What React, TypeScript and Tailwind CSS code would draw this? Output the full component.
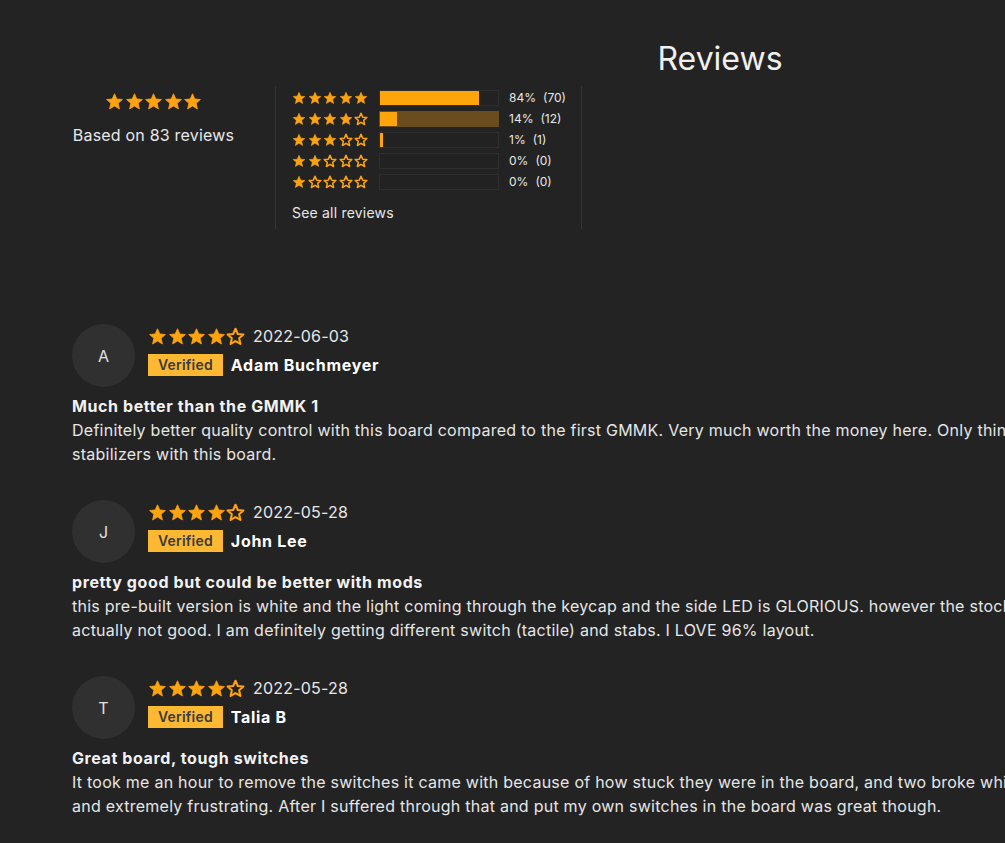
import React from "react";

type Review = {
    initial: string;
    rating: number;
    date: string;
    name: string;
    title: string;
    lines: string[];
};

const reviews: Review[] = [
    {
        initial: "A",
        rating: 4,
        date: "2022-06-03",
        name: "Adam Buchmeyer",
        title: "Much better than the GMMK 1",
        lines: [
            "Definitely better quality control with this board compared to the first GMMK. Very much worth the money here. Only thing I would change is the",
            "stabilizers with this board.",
        ],
    },
    {
        initial: "J",
        rating: 4,
        date: "2022-05-28",
        name: "John Lee",
        title: "pretty good but could be better with mods",
        lines: [
            "this pre-built version is white and the light coming through the keycap and the side LED is GLORIOUS. however the stock switches are",
            "actually not good. I am definitely getting different switch (tactile) and stabs. I LOVE 96% layout.",
        ],
    },
    {
        initial: "T",
        rating: 4,
        date: "2022-05-28",
        name: "Talia B",
        title: "Great board, tough switches",
        lines: [
            "It took me an hour to remove the switches it came with because of how stuck they were in the board, and two broke which was annoying",
            "and extremely frustrating. After I suffered through that and put my own switches in the board was great though.",
        ],
    },
];

const histogram = [
    { stars: 5, pct: 84, count: 70, highlight: false },
    { stars: 4, pct: 14, count: 12, highlight: true },
    { stars: 3, pct: 1, count: 1, highlight: false },
    { stars: 2, pct: 0, count: 0, highlight: false },
    { stars: 1, pct: 0, count: 0, highlight: false },
];

const STAR = "M12 2.2l2.9 6.6 7.1.7-5.4 4.8 1.6 7.1L12 17.7l-6.2 3.7 1.6-7.1L2 9.5l7.1-.7z";

const Star = ({ filled, size }: { filled: boolean; size: number }) => (
    <svg width={size} height={size} viewBox="0 0 24 24" className="shrink-0">
        {filled ? (
            <path d={STAR} fill="#ffa30f" stroke="#ffa30f" strokeWidth="1" strokeLinejoin="round" />
        ) : (
            <path d={STAR} fill="none" stroke="#ffa30f" strokeWidth="2.6" strokeLinejoin="round" />
        )}
    </svg>
);

const Stars = ({ rating, size, gap }: { rating: number; size: number; gap: string }) => (
    <div className={`flex items-center ${gap}`}>
        {[1, 2, 3, 4, 5].map((i) => (
            <Star key={i} filled={i <= rating} size={size} />
        ))}
    </div>
);

const App: React.FC = () => {
    return (
        <div className="w-[1005px] h-[843px] overflow-hidden bg-[#232323] text-[#e8e8e8] font-['Inter',sans-serif]">
            <div className="w-[1440px] px-[72px]">
                <h1 className="pt-[39px] text-center text-[32px] leading-[40px] font-normal text-[#f0f0f0]">
                    Reviews
                </h1>

                {/* Summary */}
                <div className="flex mt-[7px]">
                    <div className="w-[163px] flex flex-col items-center pt-[6px]">
                        <Stars rating={5} size={19} gap="gap-[0.5px]" />
                        <div className="mt-[14px] text-[16px] leading-[20px] tracking-[0.2px] whitespace-nowrap">
                            Based on 83 reviews
                        </div>
                    </div>
                    <div className="ml-[40px] w-[307px] border-l border-r border-[#363636] pl-[16px] pt-[4px] pb-[6px]">
                        <div className="flex flex-col gap-[5px]">
                            {histogram.map((row) => (
                                <div key={row.stars} className="flex items-center h-[16px]">
                                    <Stars rating={row.stars} size={14} gap="gap-[1.5px]" />
                                    <div
                                        className={`ml-[11px] w-[120px] h-[16px] border ${
                                            row.highlight
                                                ? "bg-[#6a4c1f] border-[#6a4c1f]"
                                                : "bg-[#222222] border-[#2e2e2e]"
                                        }`}
                                    >
                                        <div
                                            className="h-full bg-[#ffa50a]"
                                            style={{ width: `${row.pct}%`, minWidth: row.pct > 0 ? "3px" : 0 }}
                                        />
                                    </div>
                                    <div className="ml-[10px] text-[12px] leading-[16px] flex gap-[7px]">
                                        <span>{row.pct}%</span>
                                        <span>({row.count})</span>
                                    </div>
                                </div>
                            ))}
                        </div>
                        <div className="mt-[13px] text-[14px] leading-[20px] tracking-[0.2px]">See all reviews</div>
                    </div>
                </div>

                {/* Review list */}
                <div className="mt-[95px] flex flex-col gap-[34px]">
                    {reviews.map((r) => (
                        <div key={r.name}>
                            <div className="flex gap-[13px]">
                                <div className="w-[63px] h-[63px] rounded-full bg-[#303030] flex items-center justify-center text-[16px] text-[#e0e0e0]">
                                    {r.initial}
                                </div>
                                <div className="pt-[2px]">
                                    <div className="flex items-center h-[20px] gap-[8px]">
                                        <Stars rating={r.rating} size={19} gap="gap-[0.5px]" />
                                        <span className="text-[16px] leading-[20px] tracking-[0.2px]">{r.date}</span>
                                    </div>
                                    <div className="mt-[7px] flex items-center gap-[8px]">
                                        <span className="h-[22px] px-[10px] bg-[#fdb833] text-[#3b3b3b] text-[14px] font-semibold leading-[22px] tracking-[0.2px]">
                                            Verified
                                        </span>
                                        <span className="text-[16px] font-bold tracking-[0.7px] text-white">{r.name}</span>
                                    </div>
                                </div>
                            </div>
                            <div className="mt-[7px] text-[16px] leading-[24px] font-bold tracking-[0.6px] text-[#f2f2f2]">
                                {r.title}
                            </div>
                            <p className="text-[16px] leading-[24px] tracking-[0.25px] whitespace-nowrap text-[#e6e6e6]">
                                {r.lines[0]}
                                <br />
                                {r.lines[1]}
                            </p>
                        </div>
                    ))}
                </div>
            </div>
        </div>
    );
};

export default App;
